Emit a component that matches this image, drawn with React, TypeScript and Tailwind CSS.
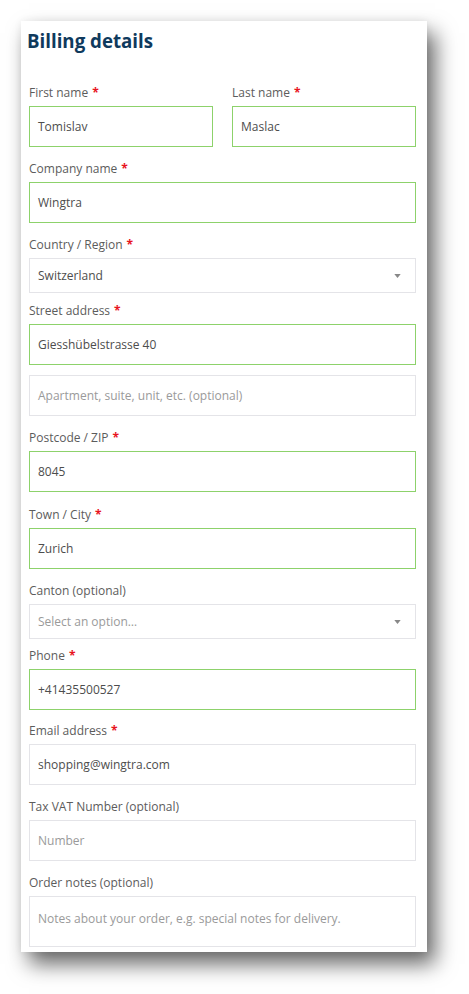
import React from "react";

type FieldProps = {
  label: string;
  required?: boolean;
  value?: string;
  placeholder?: string;
  valid?: boolean;
  kind?: "input" | "select" | "textarea";
  className?: string;
};

function Label({ label, required }: { label: string; required?: boolean }) {
  return (
    <div className="h-[18px] text-[12px] leading-[18px] text-[#5c5c5c]">
      {label}
      {required && <span className="ml-[4px] font-bold text-[#e8141e]">*</span>}
    </div>
  );
}

function Field({ label, required, value, placeholder, valid, kind = "input", className = "" }: FieldProps) {
  return (
    <div className={className}>
      {label && <Label label={label} required={required} />}
      <Box value={value} placeholder={placeholder} valid={valid} kind={kind} />
    </div>
  );
}

function Box({
  value,
  placeholder,
  valid,
  kind = "input",
}: {
  value?: string;
  placeholder?: string;
  valid?: boolean;
  kind?: "input" | "select" | "textarea";
}) {
  const border = valid ? "border-[1.5px] border-[#8dd26b]" : "border border-[#e4e4e8]";
  const height =
    kind === "select"
      ? "h-[35px] items-center"
      : kind === "textarea"
        ? "h-[51px] items-start pt-[13px]"
        : "h-[41px] items-center";
  return (
    <div className={`mt-[4px] flex ${height} ${border} bg-white pl-[8px] pr-[14px] text-[12px]`}>
      <span className={`flex-1 ${value ? "text-[#4d4d4d]" : "text-[#9a9a9a]"}`}>{value ?? placeholder}</span>
      {kind === "select" && (
        <svg width="7" height="4" viewBox="0 0 8 5">
          <path d="M0 0h8L4 5z" fill="#888" />
        </svg>
      )}
    </div>
  );
}

export default function App() {
  return (
    <div className="min-h-screen bg-white pl-[21px] pt-[21px] font-['Open_Sans',sans-serif]">
      <div className="h-[931px] w-[406px] bg-white pl-[8px] pr-[11px] shadow-[8px_12px_20px_rgba(0,0,0,0.6),0_0_8px_rgba(0,0,0,0.06)]">
        <h2 className="-ml-[2px] pt-[6px] text-[18.7px] font-bold leading-[28px] text-[#0f3a5d]">Billing details</h2>

        <div className="mt-[29px] flex gap-[19px]">
          <Field className="flex-1" label="First name" required value="Tomislav" valid />
          <Field className="flex-1" label="Last name" required value="Maslac" valid />
        </div>

        <Field className="mt-[13px]" label="Company name" required value="Wingtra" valid />
        <Field className="mt-[13px]" label="Country / Region" required value="Switzerland" kind="select" />
        <Field className="mt-[9px]" label="Street address" required value="Giesshübelstrasse 40" valid />
        <div className="mt-[10px]">
          <Box placeholder="Apartment, suite, unit, etc. (optional)" />
        </div>
        <Field className="mt-[13px]" label="Postcode / ZIP" required value="8045" valid />
        <Field className="mt-[14px]" label="Town / City" required value="Zurich" valid />
        <Field className="mt-[13px]" label="Canton (optional)" placeholder="Select an option…" kind="select" />
        <Field className="mt-[8px]" label="Phone" required value="+41435500527" valid />
        <Field className="mt-[12px]" label="Email address" required value="shopping@wingtra.com" />
        <Field className="mt-[13px]" label="Tax VAT Number (optional)" placeholder="Number" />
        <Field className="mt-[13px]" label="Order notes (optional)" placeholder="Notes about your order, e.g. special notes for delivery." kind="textarea" />
      </div>
    </div>
  );
}
